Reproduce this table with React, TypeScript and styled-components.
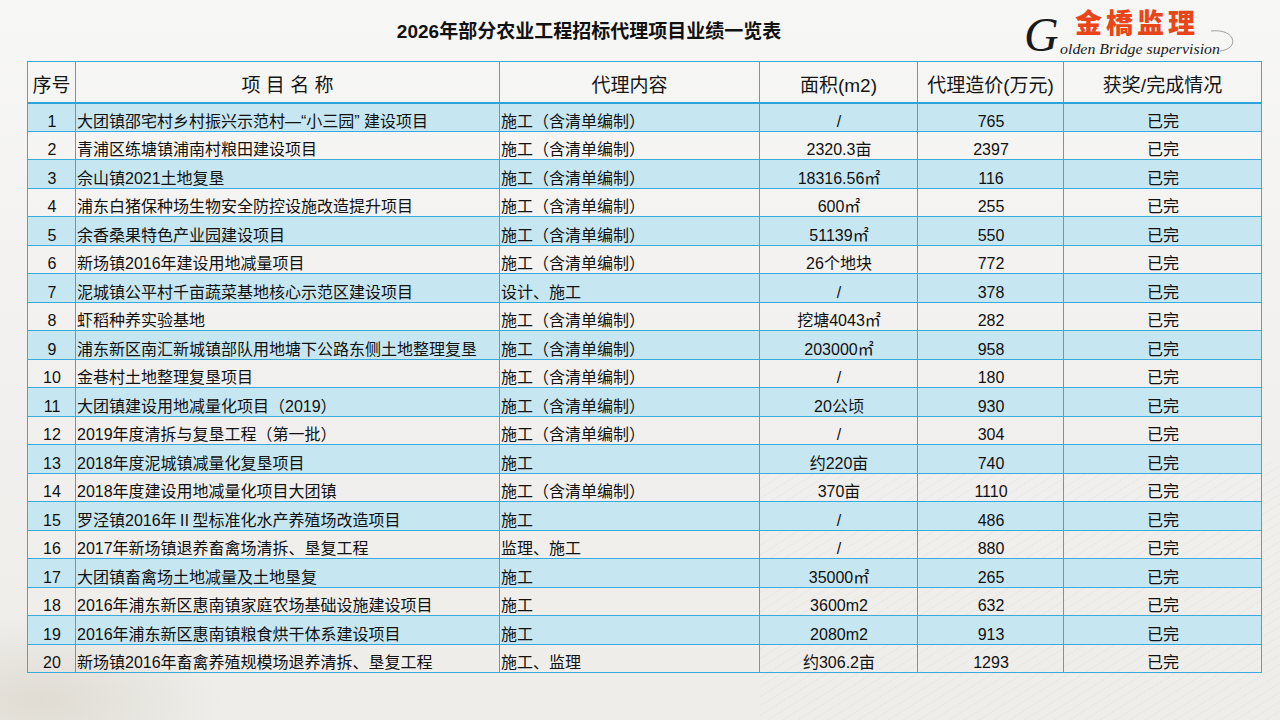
import * as React from 'react';
import styled, { createGlobalStyle } from 'styled-components';

interface Project {
    name: string;
    content: string;
    area: string;
    cost: string;
    status: string;
}

const projects: Project[] = [
    { name: '大团镇邵宅村乡村振兴示范村—“小三园” 建设项目', content: '施工（含清单编制）', area: '/', cost: '765', status: '已完' },
    { name: '青浦区练塘镇浦南村粮田建设项目', content: '施工（含清单编制）', area: '2320.3亩', cost: '2397', status: '已完' },
    { name: '佘山镇2021土地复垦', content: '施工（含清单编制）', area: '18316.56㎡', cost: '116', status: '已完' },
    { name: '浦东白猪保种场生物安全防控设施改造提升项目', content: '施工（含清单编制）', area: '600㎡', cost: '255', status: '已完' },
    { name: '余香桑果特色产业园建设项目', content: '施工（含清单编制）', area: '51139㎡', cost: '550', status: '已完' },
    { name: '新场镇2016年建设用地减量项目', content: '施工（含清单编制）', area: '26个地块', cost: '772', status: '已完' },
    { name: '泥城镇公平村千亩蔬菜基地核心示范区建设项目', content: '设计、施工', area: '/', cost: '378', status: '已完' },
    { name: '虾稻种养实验基地', content: '施工（含清单编制）', area: '挖塘4043㎡', cost: '282', status: '已完' },
    { name: '浦东新区南汇新城镇部队用地塘下公路东侧土地整理复垦', content: '施工（含清单编制）', area: '203000㎡', cost: '958', status: '已完' },
    { name: '金巷村土地整理复垦项目', content: '施工（含清单编制）', area: '/', cost: '180', status: '已完' },
    { name: '大团镇建设用地减量化项目（2019）', content: '施工（含清单编制）', area: '20公顷', cost: '930', status: '已完' },
    { name: '2019年度清拆与复垦工程（第一批）', content: '施工（含清单编制）', area: '/', cost: '304', status: '已完' },
    { name: '2018年度泥城镇减量化复垦项目', content: '施工', area: '约220亩', cost: '740', status: '已完' },
    { name: '2018年度建设用地减量化项目大团镇', content: '施工（含清单编制）', area: '370亩', cost: '1110', status: '已完' },
    { name: '罗泾镇2016年Ⅱ型标准化水产养殖场改造项目', content: '施工', area: '/', cost: '486', status: '已完' },
    { name: '2017年新场镇退养畜禽场清拆、垦复工程', content: '监理、施工', area: '/', cost: '880', status: '已完' },
    { name: '大团镇畜禽场土地减量及土地垦复', content: '施工', area: '35000㎡', cost: '265', status: '已完' },
    { name: '2016年浦东新区惠南镇家庭农场基础设施建设项目', content: '施工', area: '3600m2', cost: '632', status: '已完' },
    { name: '2016年浦东新区惠南镇粮食烘干体系建设项目', content: '施工', area: '2080m2', cost: '913', status: '已完' },
    { name: '新场镇2016年畜禽养殖规模场退养清拆、垦复工程', content: '施工、监理', area: '约306.2亩', cost: '1293', status: '已完' },
];

const columns = [
    { label: '序号', width: 48 },
    { label: '项 目 名 称', width: 424 },
    { label: '代理内容', width: 260 },
    { label: '面积(m2)', width: 158 },
    { label: '代理造价(万元)', width: 146 },
    { label: '获奖/完成情况', width: 198 },
];

const BrandLogo = () => (
    <Logo width="214" height="58" viewBox="0 0 214 58">
        <text x="1" y="51" fontFamily="Liberation Serif, serif" fontStyle="italic" fontSize="48" fill="#1a1a1a">G</text>
        <text x="52" y="32.5" fontFamily="Noto Sans CJK TC, Noto Sans CJK SC, serif" fontWeight="900" fontSize="27" letterSpacing="4" fill="#e8461a">金橋监理</text>
        <text x="37" y="53.5" fontFamily="Liberation Serif, serif" fontStyle="italic" fontSize="14.5" textLength="160" lengthAdjust="spacingAndGlyphs" fill="#1a1a1a">olden Bridge supervision</text>
        <path d="M197 51 C 206 50, 212 45, 209 38 C 206 32, 197 30, 188 31" fill="none" stroke="#8a8a8a" strokeWidth="0.8" />
    </Logo>
);

export default function App() {
    return (
        <>
            <GlobalStyle />
            <Slide>
                <Header>
                    <Title>2026年部分农业工程招标代理项目业绩一览表</Title>
                    <BrandLogo />
                </Header>

                <Table>
                    <colgroup>
                        {columns.map((c, i) => <col key={i} style={{ width: c.width }} />)}
                    </colgroup>
                    <thead>
                        <HeadRow>
                            {columns.map((c, i) => <HeadCell key={i}>{c.label}</HeadCell>)}
                        </HeadRow>
                    </thead>
                    <tbody>
                        {projects.map((p, index) => (
                            <Row key={index} $striped={index % 2 === 0}>
                                <Cell $align="center">{index + 1}</Cell>
                                <Cell>{p.name}</Cell>
                                <Cell>{p.content}</Cell>
                                <Cell $align="center">{p.area}</Cell>
                                <Cell $align="center">{p.cost}</Cell>
                                <Cell $align="center">{p.status}</Cell>
                            </Row>
                        ))}
                    </tbody>
                </Table>
            </Slide>
        </>
    );
}

const GlobalStyle = createGlobalStyle`
    html, body {
        margin: 0;
        padding: 0;
    }
    body {
        font-family: "Liberation Sans", "Noto Sans CJK SC", sans-serif;
        color: #111;
    }
`;

const Slide = styled.div`
    width: 1280px;
    height: 720px;
    overflow: hidden;
    background:
        repeating-linear-gradient(-32deg, transparent 0 7px, rgba(0, 0, 0, 0.025) 7px 8px) right bottom / 520px 260px no-repeat,
        radial-gradient(ellipse 260px 120px at 40px 700px, rgba(190, 180, 160, 0.3), transparent 70%),
        linear-gradient(180deg, #f7f7f6 0%, #f1f0ee 55%, #eeede9 100%);
`;

/* title centred over 27..1151, logo laid over its right end */
const Header = styled.header`
    display: grid;
    grid-template-columns: 27px 996px 128px 86px 1fr;
    grid-template-rows: 61px;
`;

const Title = styled.h1`
    grid-column: 2 / 4;
    grid-row: 1;
    margin: 0;
    padding-top: 21px;
    text-align: center;
    font-size: 19px;
    line-height: 22px;
    font-weight: 700;
    color: #111;
`;

const Logo = styled.svg`
    grid-column: 3 / 5;
    grid-row: 1;
    display: block;
    overflow: visible;
`;

const Table = styled.table`
    margin-left: 27px;
    width: 1234px;
    border-collapse: collapse;
    table-layout: fixed;
    border: 1px solid #3aaadd;
`;

const HeadRow = styled.tr`
    height: 41px;
`;

const HeadCell = styled.th`
    padding: 8px 0 0;
    border: 1px solid #3aaadd;
    border-bottom: 2px solid #2ca3da;
    text-align: center;
    vertical-align: middle;
    font-size: 19px;
    font-weight: 400;
    line-height: 24px;
    color: #151515;
    white-space: nowrap;
`;

const Row = styled.tr<{ $striped?: boolean }>`
    height: 28.5px;
    background: ${props => props.$striped ? '#c6e6f2' : 'transparent'};
`;

const Cell = styled.td<{ $align?: 'left' | 'center' }>`
    padding: 0 0 0 1px;
    border: 1px solid #3aaadd;
    text-align: ${props => props.$align || 'left'};
    vertical-align: bottom;
    font-size: 16px;
    line-height: 18px;
    color: #111;
    white-space: nowrap;
    overflow: hidden;
`;
